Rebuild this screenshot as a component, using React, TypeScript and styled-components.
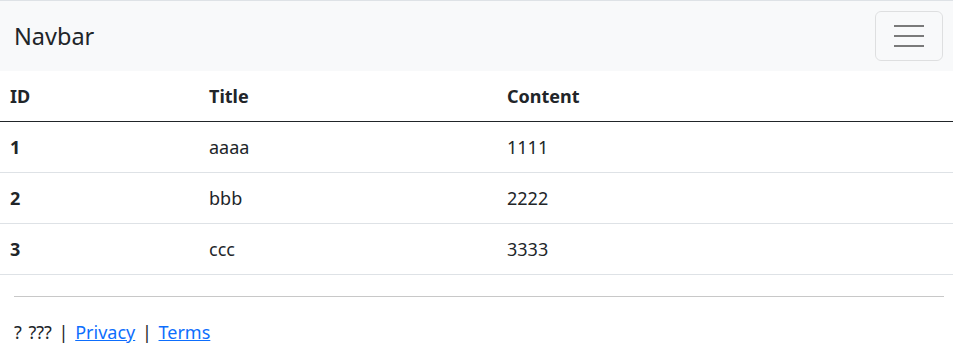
import styled, { createGlobalStyle } from 'styled-components'

const GlobalStyle = createGlobalStyle`
  body {
    margin: 0;
    font-family: "Noto Sans", "Open Sans", sans-serif;
    font-size: 18px;
    color: #212529;
    background: #fff;
  }
`

const rows = [
  { id: 1, title: 'aaaa', content: '1111' },
  { id: 2, title: 'bbb', content: '2222' },
  { id: 3, title: 'ccc', content: '3333' },
]

export default function App() {
  return (
    <>
      <GlobalStyle />
      <Navbar>
        <Brand>Navbar</Brand>
        <Toggler aria-label="Toggle navigation">
          <Bar />
          <Bar />
          <Bar />
        </Toggler>
      </Navbar>
      <Table>
        <colgroup>
          <col style={{ width: 199 }} />
          <col style={{ width: 298 }} />
          <col />
        </colgroup>
        <thead>
          <HeadRow>
            <HeadCell>ID</HeadCell>
            <HeadCell>Title</HeadCell>
            <HeadCell>Content</HeadCell>
          </HeadRow>
        </thead>
        <tbody>
          {rows.map((row) => (
            <BodyRow key={row.id}>
              <RowHead>{row.id}</RowHead>
              <Cell>{row.title}</Cell>
              <Cell>{row.content}</Cell>
            </BodyRow>
          ))}
        </tbody>
      </Table>
      <Footer>
        <Rule />
        <FooterText>
          ? ??? | <FooterLink href="#">Privacy</FooterLink> | <FooterLink href="#">Terms</FooterLink>
        </FooterText>
      </Footer>
    </>
  )
}

const Navbar = styled.nav`
  display: flex;
  align-items: center;
  justify-content: space-between;
  height: 70px;
  padding: 0 10px 0 14px;
  background: #f8f9fa;
  border-top: 1px solid #dee2e6;
`

const Brand = styled.a`
  font-size: 23.5px;
  color: #212529;
  text-decoration: none;
`

const Toggler = styled.button`
  display: flex;
  flex-direction: column;
  align-items: center;
  justify-content: center;
  gap: 8px;
  width: 68px;
  height: 50px;
  margin-top: -1px;
  padding: 0;
  background: transparent;
  border: 1px solid rgba(0, 0, 0, 0.1);
  border-radius: 6px;
`

const Bar = styled.span`
  display: block;
  width: 30px;
  height: 2px;
  background: #7a7a7a;
`

const Table = styled.table`
  width: 100%;
  table-layout: fixed;
  border-collapse: collapse;
`

const HeadRow = styled.tr`
  height: 50px;
  border-bottom: 1px solid #212529;
`

const HeadCell = styled.th`
  padding: 0 8px 0 10px;
  text-align: left;
  font-weight: 700;
  vertical-align: middle;
`

const BodyRow = styled.tr`
  height: 51px;
  border-bottom: 1px solid #dee2e6;
`

const RowHead = styled.th`
  padding: 0 8px 0 10px;
  text-align: left;
  font-weight: 700;
`

const Cell = styled.td`
  padding: 0 8px 0 10px;
`

const Footer = styled.footer`
  padding: 21px 9px 0 14px;
`

const Rule = styled.hr`
  margin: 0;
  border: 0;
  border-top: 1px solid #c8c8c8;
`

const FooterText = styled.p`
  margin: 22px 0 0;
  line-height: 26px;
  word-spacing: 2px;
`

const FooterLink = styled.a`
  color: #0d6efd;
  text-decoration: underline;
`
